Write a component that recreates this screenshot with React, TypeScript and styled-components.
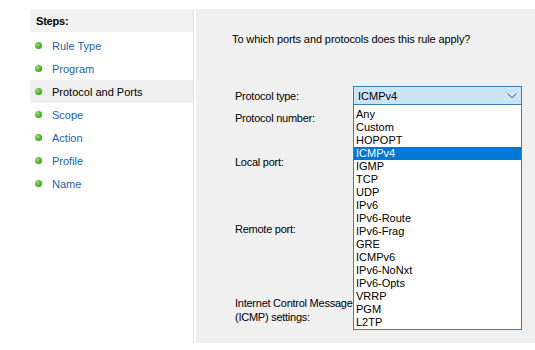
import React, { FC } from "react";
import styled, { createGlobalStyle } from "styled-components";

const GlobalStyle = createGlobalStyle`
  html, body {
    margin: 0;
    padding: 0;
    background: #ffffff;
  }
  body {
    font-family: "Liberation Sans", Arial, sans-serif;
    font-size: 11px;
    color: #000;
  }
`;

const Window = styled.div`
  display: flex;
  width: 535px;
  height: 350px;
  padding: 9px 0 0 30px;
  box-sizing: border-box;
  background: #fff;
`;

const StepsPane = styled.div`
  width: 164px;
  height: 334px;
  border-right: 1px solid #e2e2e2;
  box-sizing: border-box;
  background: #fff;
`;

const StepsHeader = styled.div`
  height: 23px;
  display: flex;
  align-items: center;
  padding-left: 6px;
  background: #f2f2f2;
  font-weight: bold;
  font-size: 11px;
  letter-spacing: -0.2px;
`;

const StepList = styled.ul`
  list-style: none;
  margin: 2px 0 0;
  padding: 0;
`;

const StepItem = styled.li<{ $active?: boolean }>`
  height: 23px;
  display: flex;
  align-items: center;
  padding-left: 5px;
  gap: 10px;
  background: ${(p) => (p.$active ? "#efefef" : "transparent")};
  color: ${(p) => (p.$active ? "#000" : "#1f5fa6")};
  font-size: 11px;
`;

const Bullet = styled.span`
  width: 7px;
  height: 7px;
  border-radius: 50%;
  background: radial-gradient(circle at 35% 35%, #9be06a 0%, #4cae2c 55%, #2f8a1c 100%);
  flex-shrink: 0;
`;

const ContentPane = styled.div`
  flex: 1;
  height: 334px;
  margin-left: 2px;
  background: #f0f0f0;
  padding: 24px 0 0 36px;
  box-sizing: border-box;
`;

const Question = styled.div`
  font-size: 11px;
  line-height: 13px;
  letter-spacing: -0.1px;
`;

const Form = styled.div`
  margin-top: 40px;
  padding-left: 3px;
  display: flex;
  flex-direction: column;
`;

const Field = styled.div<{ $top: number; $height: number }>`
  display: flex;
  align-items: center;
  margin-top: ${(p) => p.$top}px;
  height: ${(p) => p.$height}px;
`;

const Label = styled.div`
  width: 118px;
  flex-shrink: 0;
  white-space: nowrap;
  font-size: 11px;
  line-height: 14px;
  letter-spacing: -0.25px;
`;

const ComboWrap = styled.div`
  position: relative;
`;

const Combo = styled.div`
  width: 169px;
  height: 19px;
  box-sizing: border-box;
  border: 1px solid #3c7fb1;
  background: #cce4f7;
  display: flex;
  align-items: center;
  justify-content: space-between;
  padding: 0 4px 0 4px;
  font-size: 11px;
`;

const DropList = styled.ul`
  position: absolute;
  top: 19px;
  left: 0;
  width: 169px;
  box-sizing: border-box;
  margin: 0;
  padding: 3px 0 0;
  list-style: none;
  background: #fff;
  border: 1px solid #3f7fb3;
  border-top: none;
  z-index: 2;
`;

const Option = styled.li<{ $selected?: boolean }>`
  height: 13px;
  line-height: 13px;
  padding-left: 2px;
  font-size: 11px;
  background: ${(p) => (p.$selected ? "#0078d7" : "transparent")};
  color: ${(p) => (p.$selected ? "#fff" : "#000")};
`;

const steps = ["Rule Type", "Program", "Protocol and Ports", "Scope", "Action", "Profile", "Name"];

const protocols = [
  "Any",
  "Custom",
  "HOPOPT",
  "ICMPv4",
  "IGMP",
  "TCP",
  "UDP",
  "IPv6",
  "IPv6-Route",
  "IPv6-Frag",
  "GRE",
  "ICMPv6",
  "IPv6-NoNxt",
  "IPv6-Opts",
  "VRRP",
  "PGM",
  "L2TP",
];

const Chevron: FC = () => (
  <svg width="10" height="6" viewBox="0 0 10 6">
    <path d="M0.5 0.5 L5 5 L9.5 0.5" fill="none" stroke="#555" strokeWidth="1" />
  </svg>
);

const App: FC = () => {
  const current = "ICMPv4";
  return (
    <>
      <GlobalStyle />
      <Window>
        <StepsPane>
          <StepsHeader>Steps:</StepsHeader>
          <StepList>
            {steps.map((s) => (
              <StepItem key={s} $active={s === "Protocol and Ports"}>
                <Bullet />
                {s}
              </StepItem>
            ))}
          </StepList>
        </StepsPane>
        <ContentPane>
          <Question>To which ports and protocols does this rule apply?</Question>
          <Form>
            <Field $top={0} $height={19}>
              <Label>Protocol type:</Label>
              <ComboWrap>
                <Combo>
                  <span>{current}</span>
                  <Chevron />
                </Combo>
                <DropList>
                  {protocols.map((p) => (
                    <Option key={p} $selected={p === current}>
                      {p}
                    </Option>
                  ))}
                </DropList>
              </ComboWrap>
            </Field>
            <Field $top={5} $height={16}>
              <Label>Protocol number:</Label>
            </Field>
            <Field $top={28} $height={16}>
              <Label>Local port:</Label>
            </Field>
            <Field $top={51} $height={16}>
              <Label>Remote port:</Label>
            </Field>
            <Field $top={58} $height={30}>
              <Label>
                Internet Control Message
                <br />
                (ICMP) settings:
              </Label>
            </Field>
          </Form>
        </ContentPane>
      </Window>
    </>
  );
};

export default App;
